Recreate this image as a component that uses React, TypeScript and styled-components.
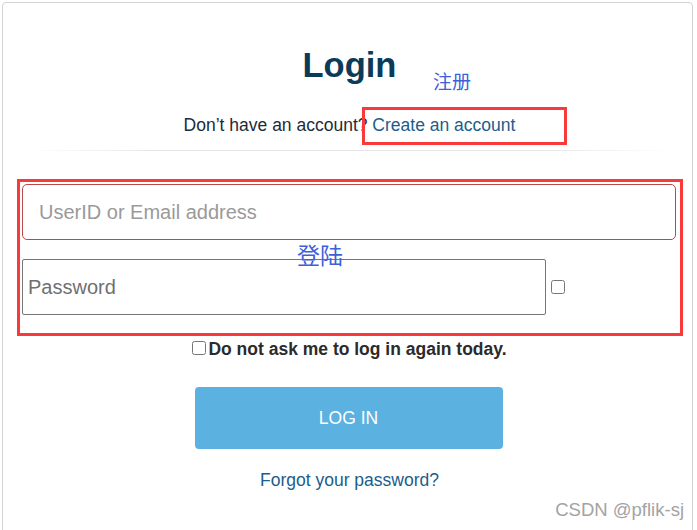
import React from 'react';
import styled, { createGlobalStyle } from 'styled-components';

const GlobalStyle = createGlobalStyle`
  html, body {
    margin: 0;
    padding: 0;
    background: #ffffff;
  }
  body {
    font-family: "Liberation Sans", Arial, sans-serif;
  }
  * {
    box-sizing: border-box;
  }
`;

const Page = styled.div`
  position: relative;
  width: 697px;
  height: 530px;
  overflow: hidden;
  background: #ffffff;
`;

const Card = styled.div`
  margin: 2px 4px 0 2px;
  height: 560px;
  border: 1px solid #d2d2d2;
  border-radius: 4px;
  padding: 0 10px 0 14px;
  display: flex;
  flex-direction: column;
`;

const Title = styled.h1`
  margin: 42px 0 0;
  font-size: 34.5px;
  line-height: 40px;
  font-weight: 700;
  color: #0b3b58;
  text-align: center;
`;

const Subtitle = styled.p`
  margin: 30px 0 0;
  font-size: 17.5px;
  line-height: 20px;
  color: #1d2b3a;
  text-align: center;
`;

const Link = styled.a`
  color: #1b5d8c;
  text-decoration: none;
  cursor: pointer;
`;

const Divider = styled.div`
  margin: 15px 10px 0;
  height: 1px;
  background: linear-gradient(to right, rgba(230, 230, 230, 0), #e6e6e6 20%, #e6e6e6 80%, rgba(230, 230, 230, 0));
`;

const FieldGroup = styled.div`
  margin: 28px -1px 0 0;
  border: 3px solid #f83a3a;
  padding: 2px 4px 18px 2px;
  display: flex;
  flex-direction: column;
  gap: 19px;
`;

const TextInput = styled.input<{ $rounded?: boolean }>`
  height: 56px;
  margin: 0;
  font-family: "Liberation Sans", Arial, sans-serif;
  font-size: 20px;
  color: #333;
  background: #fff;
  outline: none;
  border: 1px solid ${(p) => (p.$rounded ? '#b9484b' : '#767676')};
  border-radius: ${(p) => (p.$rounded ? '5px' : '2px')};
  padding: 0 ${(p) => (p.$rounded ? '16px' : '5px')};
  &::placeholder {
    color: ${(p) => (p.$rounded ? '#9a9a9a' : '#707070')};
  }
`;

const PasswordRow = styled.div`
  display: flex;
  align-items: center;
`;

const PasswordInput = styled(TextInput)`
  width: 524px;
  flex: none;
`;

const Check = styled.input.attrs({ type: 'checkbox' })`
  width: 14px;
  height: 14px;
  margin: 0 0 0 5px;
  flex: none;
`;

const RememberRow = styled.label`
  margin-top: 3px;
  display: flex;
  justify-content: center;
  align-items: center;
  font-size: 17.5px;
  line-height: 20px;
  font-weight: 700;
  color: #2b2b2b;
  cursor: pointer;

  input {
    margin: -3px 2px 0 0;
  }
`;

const LoginButton = styled.button`
  align-self: center;
  margin: 28px 0 0 -2px;
  width: 308px;
  height: 62px;
  border: none;
  border-radius: 4px;
  background: #5bb1df;
  color: #ffffff;
  font-family: "Liberation Sans", Arial, sans-serif;
  font-size: 17.5px;
  cursor: pointer;
`;

const Forgot = styled.p`
  margin: 21px 0 0;
  font-size: 17.5px;
  line-height: 20px;
  text-align: center;
`;

const Note = styled.span<{ $size: number; $left: number; $top: number }>`
  position: absolute;
  left: ${(p) => p.$left}px;
  top: ${(p) => p.$top}px;
  font-family: "Noto Sans CJK SC", sans-serif;
  font-size: ${(p) => p.$size}px;
  line-height: 1;
  color: #3d5fd8;
`;

const Highlight = styled.div`
  position: absolute;
  left: 362px;
  top: 107px;
  width: 205px;
  height: 38px;
  border: 3px solid #f83a3a;
  pointer-events: none;
`;

const Watermark = styled.span`
  position: absolute;
  right: 13px;
  bottom: 9px;
  font-size: 18.5px;
  color: #a3a3a3;
`;

const App: React.FC = () => (
  <Page>
    <GlobalStyle />
    <Card>
      <Title>Login</Title>
      <Subtitle>
        Don’t have an account? <Link>Create an account</Link>
      </Subtitle>
      <Divider />
      <FieldGroup>
        <TextInput $rounded placeholder="UserID or Email address" />
        <PasswordRow>
          <PasswordInput type="password" placeholder="Password" />
          <Check />
        </PasswordRow>
      </FieldGroup>
      <RememberRow>
        <Check />
        Do not ask me to log in again today.
      </RememberRow>
      <LoginButton>LOG IN</LoginButton>
      <Forgot>
        <Link>Forgot your password?</Link>
      </Forgot>
    </Card>
    <Highlight />
    <Note $size={19} $left={433} $top={71}>注册</Note>
    <Note $size={23} $left={297} $top={243}>登陆</Note>
    <Watermark>CSDN @pflik-sj</Watermark>
  </Page>
);

export default App;
